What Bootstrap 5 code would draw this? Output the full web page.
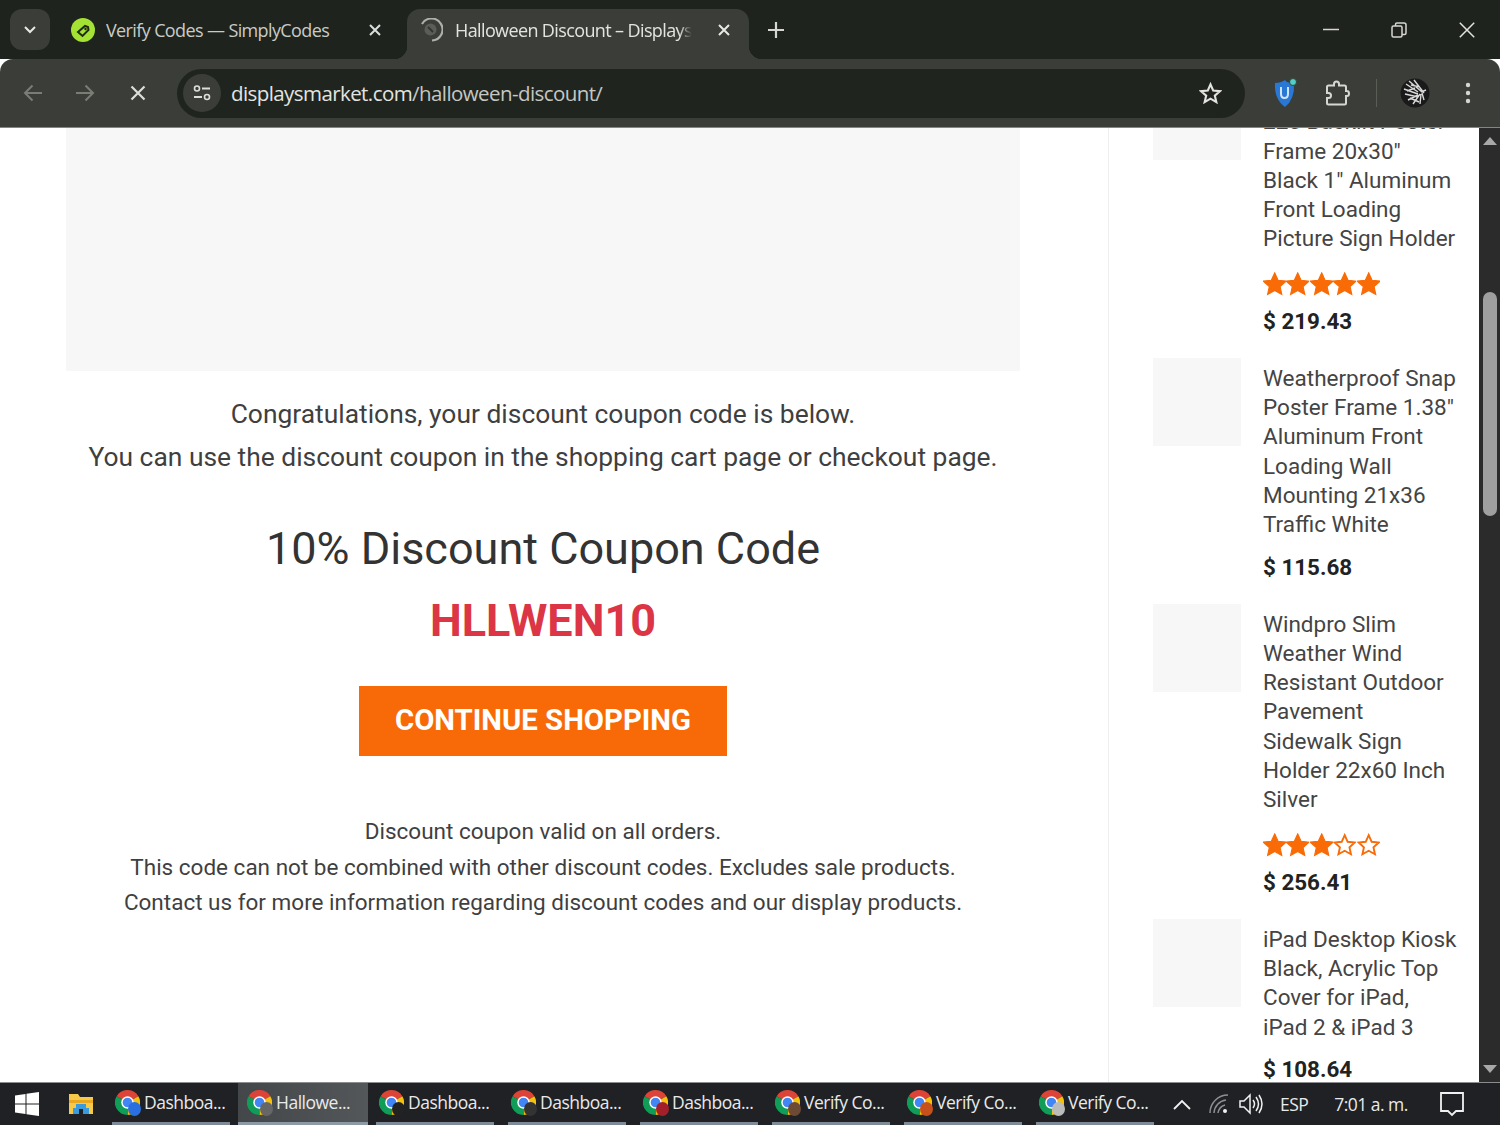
<!DOCTYPE html>
<html lang="es">
<head>
<meta charset="utf-8">
<title>Halloween Discount</title>
<link href="https://cdn.jsdelivr.net/npm/bootstrap@5.3.0/dist/css/bootstrap.min.css" rel="stylesheet">
<style>
html,body{height:1125px;overflow:hidden;background:#fff}
body{width:1500px;font-family:Roboto,sans-serif}
.tabstrip{height:59px;background:#1f231e;color:#c9cbc6;font-family:"Open Sans",sans-serif}
.tab-switch{width:40px;height:41px;margin:9px 0 0 10px;background:#3b3e38;border-radius:12px}
.tab-idle{width:347px;padding:0 15px 0 21px;height:42px;margin-top:9px}
.tab-name{font-size:18px;letter-spacing:-.62px;white-space:nowrap;overflow:hidden}
.tab-name-1{width:235px;margin-left:11px}
.tab-live{width:342px;height:50px;margin:9px 0 0 10px;padding:0 18px 8px 12px;background:#3b3e38;border-radius:13px 13px 0 0;color:#e3e4e1;position:relative}
.tab-live::before,.tab-live::after{content:"";position:absolute;bottom:0;width:13px;height:13px}
.tab-live::before{left:-13px;background:radial-gradient(circle at 0 0,transparent 13px,#3b3e38 13.5px)}
.tab-live::after{right:-13px;background:radial-gradient(circle at 100% 0,transparent 13px,#3b3e38 13.5px)}
.tab-name-2{width:244px;margin-left:12px;-webkit-mask-image:linear-gradient(90deg,#000 92%,transparent 97%);mask-image:linear-gradient(90deg,#000 92%,transparent 97%)}
.new-tab{margin:9px 0 0 19px;height:42px}
.win-controls{margin-left:auto;height:59px;padding:0 25px 0 0;gap:52px}
.toolbar{height:69px;background:#3b3e38;border-bottom:1px solid #85877f;border-radius:13px 13px 0 0;padding:0 23px 0 23px}
.nav-gap-a{margin-left:32px}.nav-gap-b{margin-left:35px}
.omni{margin-left:31px;width:1068px;height:49px;background:#20241f;border-radius:25px;padding:0 23px 0 6px;color:#e3e4e1}
.site-chip{width:38px;height:38px;background:#3b3e38;border-radius:50%}
.url{margin-left:10px;font-family:"Open Sans",sans-serif;font-size:20.5px;letter-spacing:-.58px;white-space:nowrap}
.url-rest{color:#c5c7c2}
.ext-shield{margin-left:28px}.ext-puzzle{margin-left:28px}
.tool-sep{width:1px;height:28px;background:#5a5d56;margin:0 23px 0 26px}
.menu-dots{margin-left:35px}
.page-view{height:954px;min-height:0;overflow:hidden}
.content-main{width:1109px;flex:none;padding-left:66px;padding-right:88px;border-right:1px solid #eee;color:#3f3f3f}
.placeholder-box{height:243px;background:#f7f7f7}
.lead-copy{margin:22px 0 0;font-size:26.4px;line-height:42.5px}
.offer-title{margin:44px 0 0;font-size:45px;line-height:54px;font-weight:400;color:#333}
.offer-code{margin:18px 0 0;font-size:45px;line-height:54px;font-weight:700;color:#dc3545}
.shop-btn{margin-top:38px;width:368px;height:70px;background:#f86a07;border:0;color:#fff;font-size:29.3px;font-weight:700;line-height:68px;padding:0}
.shop-btn:hover{background:#f86a07;color:#fff}
.fine-print{margin:58px 0 0;font-size:22.5px;line-height:35.5px}
.side-rail{flex:1;padding:0 14px 0 44px;margin-top:-56px;color:#444}
.prod-item{gap:22px;margin-bottom:22px}
.prod-thumb{width:88px;height:88px;flex:none;background:#f7f7f7}
.prod-body{padding-top:6px;width:195px;flex:none}
.prod-name{font-size:22.5px;line-height:29.3px}
.prod-stars{margin-top:18px;height:24px}
.prod-price{font-size:22.4px;line-height:29px;font-weight:700;color:#222;margin-top:13px}
.prod-stars + .prod-price{margin-top:11px}
.scroll-rail{width:21px;flex:none;background:#2b2b2b}
.scroll-thumb{width:14px;height:224px;background:#9f9f9f;border-radius:7px;margin-top:147px}
.scroll-arrow{width:0;height:0;border-left:7px solid transparent;border-right:7px solid transparent}
.arrow-up{border-bottom:8px solid #a8a8a8;margin-top:9px}
.arrow-down{border-top:8px solid #a8a8a8;margin-bottom:9px}
.taskbar{height:43px;background:#1f2124;border-top:1px solid #8b8d90;color:#e9eaeb;font-family:"Open Sans",sans-serif;font-size:17.5px;letter-spacing:-.5px}
.start-slot{width:39px}
.folder-slot{width:73px;padding-left:30px}
.task-list{gap:14px}
.task-item{width:118px;height:42px;padding-left:3px;border-bottom:3px solid #7e8b96;position:relative;white-space:nowrap;gap:4px}
.task-item.is-on{width:130px;margin:0 -6px;padding-left:9px;background:linear-gradient(90deg,#44474a,#54575a);border-bottom-color:#8d99a3}
.task-badge{position:absolute;left:16px;top:19px;width:13px;height:14px;border-radius:50%}
.is-on .task-badge{left:22px}
.tray{margin-left:19px;white-space:nowrap}
.tray-wifi{margin-left:18px}.tray-vol{margin-left:10px}.tray-lang{margin-left:17px}.tray-time{margin-left:26px;letter-spacing:-.55px}.tray-note{margin-left:31px}
</style>
</head>
<body class="d-flex flex-column m-0">
<svg width="0" height="0" class="d-block">
<defs>
<symbol id="chromeLogo" viewBox="0 0 24 24">
<path fill="#db4437" d="M12 12 1.6 6A12 12 0 0 1 22.4 6Z"/>
<path fill="#f4c20d" d="M12 12 22.4 6A12 12 0 0 1 12 24Z"/>
<path fill="#0f9d58" d="M12 12 12 24A12 12 0 0 1 1.6 6Z"/>
<circle cx="12" cy="12" r="6" fill="#fff"/><circle cx="12" cy="12" r="4.6" fill="#4285f4"/>
</symbol>
<symbol id="starFull" viewBox="1 1 22 22"><path fill="#f96b06" stroke="#f96b06" stroke-width="1" d="M12 1.5l3.2 7 7.6.8-5.700 5.100 1.600 7.500L12 18.100 5.300 21.900l1.600-7.500L1.200 9.300l7.600-.8z"/></symbol>
<symbol id="starOpen" viewBox="1 1 22 22"><path fill="#fff" stroke="#f96b06" stroke-width="1.800" d="M12 2.800l2.800 6.200 6.600.7-4.900 4.500 1.400 6.500L12 17.400l-5.900 3.300 1.400-6.500-4.900-4.500 6.600-.7z"/></symbol>
</defs>
</svg>

<header class="tabstrip d-flex align-items-start flex-shrink-0">
  <div class="tab-switch d-flex align-items-center justify-content-center">
    <svg width="14" height="9" viewBox="0 0 14 9"><path d="M2 2l5 5 5-5" fill="none" stroke="#e8e9e6" stroke-width="2"/></svg>
  </div>
  <div class="tab-idle d-flex align-items-center">
    <svg width="24" height="24" viewBox="0 0 24 24" class="flex-shrink-0"><circle cx="12" cy="12" r="12" fill="#a4e234"/><path d="M7 14l7-6 3 1 .5 3-6 6z" fill="none" stroke="#1f2b10" stroke-width="2"/><circle cx="14.500" cy="11" r="1.200" fill="#1f2b10"/></svg>
    <div class="tab-name tab-name-1">Verify Codes — SimplyCodes</div>
    <svg width="14" height="14" viewBox="0 0 14 14" class="ms-auto"><path d="M2 2l10 10M12 2 2 12" stroke="#dcdedb" stroke-width="2"/></svg>
  </div>
  <div class="tab-live d-flex align-items-center">
    <svg width="24" height="24" viewBox="0 0 24 24" class="flex-shrink-0"><path d="M3 6A11 11 0 1 1 13 22.500" fill="none" stroke="#aeb0ac" stroke-width="2.200"/><circle cx="11.500" cy="11.500" r="6" fill="#5a5d58"/><path d="M9 9l5 5" stroke="#33362f" stroke-width="2"/></svg>
    <div class="tab-name tab-name-2">Halloween Discount – Displays Market</div>
    <svg width="14" height="14" viewBox="0 0 14 14" class="ms-auto"><path d="M2 2l10 10M12 2 2 12" stroke="#e8e9e6" stroke-width="2"/></svg>
  </div>
  <div class="new-tab d-flex align-items-center">
    <svg width="16" height="16" viewBox="0 0 16 16"><path d="M8 0v16M0 8h16" stroke="#d5d7d3" stroke-width="2.200"/></svg>
  </div>
  <div class="win-controls d-flex align-items-center">
    <svg width="16" height="16" viewBox="0 0 16 16"><path d="M0 7.500h16" stroke="#d5d7d3" stroke-width="1.500"/></svg>
    <svg width="16" height="16" viewBox="0 0 16 16"><rect x="1" y="4" width="10" height="11" rx="1.500" fill="none" stroke="#d5d7d3" stroke-width="1.500"/><path d="M4.500 4V2.500q0-1.500 1.500-1.500h7q2 0 2 2v8q0 1.500-1.500 1.500H11" fill="none" stroke="#d5d7d3" stroke-width="1.500"/></svg>
    <svg width="16" height="16" viewBox="0 0 16 16"><path d="M.8.800l14.400 14.400M15.200.800.800 15.200" stroke="#e3e4e1" stroke-width="1.500"/></svg>
  </div>
</header>

<nav class="toolbar d-flex align-items-center flex-shrink-0">
  <svg width="20" height="18" viewBox="0 0 20 18"><path d="M19 9H2M9.500 1.500 2 9l7.500 7.500" fill="none" stroke="#7a7d76" stroke-width="2"/></svg>
  <svg width="20" height="18" viewBox="0 0 20 18" class="nav-gap-a"><path d="M1 9h17M10.500 1.500 18 9l-7.500 7.500" fill="none" stroke="#7a7d76" stroke-width="2"/></svg>
  <svg width="16" height="16" viewBox="0 0 16 16" class="nav-gap-b"><path d="M1.500 1.500l13 13M14.500 1.500l-13 13" stroke="#dcdedb" stroke-width="2.200"/></svg>
  <div class="omni d-flex align-items-center">
    <div class="site-chip d-flex align-items-center justify-content-center">
      <svg width="18" height="18" viewBox="0 0 18 18"><circle cx="4" cy="4.500" r="2.500" fill="none" stroke="#dcdedb" stroke-width="1.600"/><path d="M9 4.500h8M1 13h8" stroke="#dcdedb" stroke-width="1.800"/><circle cx="14" cy="13" r="2.500" fill="none" stroke="#dcdedb" stroke-width="1.600"/></svg>
    </div>
    <div class="url">displaysmarket.com<span class="url-rest">/halloween-discount/</span></div>
    <svg width="23" height="22" viewBox="0 0 24 23" class="ms-auto"><path d="M12 2.500l2.800 6.400 7 .7-5.300 4.600 1.600 6.800-6.100-3.600-6.100 3.600 1.600-6.800L2.200 9.600l7-.7z" fill="none" stroke="#e3e4e1" stroke-width="2.200"/></svg>
  </div>
  <svg width="24" height="32" viewBox="0 0 24 32" class="ext-shield"><path d="M2 6q6 0 10-3 1 3 9 3 1 16-9 24Q1 22 2 6z" fill="#2a78d6"/><path d="M8 10v7q0 4 3.500 4T15 17v-7" fill="none" stroke="#cfe3fa" stroke-width="2"/><circle cx="20" cy="5" r="3.500" fill="#4fd1c5" stroke="#3b3e38"/></svg>
  <svg width="25" height="26" viewBox="0 0 25 26" class="ext-puzzle"><path d="M3.500 5.500H9V4q0-2.500 2.500-2.500T14 4v1.500h5.500Q21 5.500 21 7v4h1q2 0 2 2.500T22 16h-1v7q0 1.500-1.500 1.500h-16Q2 24.500 2 23v-5h1.500q2.500 0 2.500-2.500T3.500 13H2V7q0-1.500 1.500-1.500z" fill="none" stroke="#d5d7d3" stroke-width="2"/></svg>
  <div class="tool-sep"></div>
  <svg width="30" height="30" viewBox="0 0 30 30"><defs><clipPath id="avatarClip"><circle cx="15" cy="15" r="14.500"/></clipPath></defs><circle cx="15" cy="15" r="14.500" fill="#1a1a1a"/><g clip-path="url(#avatarClip)" stroke="#d8d8d8" stroke-width="1.400"><path d="M6 6l12 8M9 3l13 11M14 2l10 13M4 11l14 5M5 16l13 3M8 22l10-5M13 26l7-10M20 26l1-10M24 22l-2-7M26 12l-5 2M11 7l9 2M7 13l8-3M10 20l9 4"/></g></svg>
  <svg width="6" height="22" viewBox="0 0 6 22" class="menu-dots"><circle cx="3" cy="3" r="2.200" fill="#d5d7d3"/><circle cx="3" cy="11" r="2.200" fill="#d5d7d3"/><circle cx="3" cy="19" r="2.200" fill="#d5d7d3"/></svg>
</nav>

<div class="page-view d-flex flex-grow-1">
  <main class="content-main text-center">
    <div class="placeholder-box"></div>
    <p class="lead-copy">Congratulations, your discount coupon code is below.<br>You can use the discount coupon in the shopping cart page or checkout page.</p>
    <h2 class="offer-title">10% Discount Coupon Code</h2>
    <div class="offer-code">HLLWEN10</div>
    <a href="#" class="btn rounded-0 shop-btn text-uppercase">Continue Shopping</a>
    <p class="fine-print">Discount coupon valid on all orders.<br>This code can not be combined with other discount codes. Excludes sale products.<br>Contact us for more information regarding discount codes and our display products.</p>
  </main>
  <aside class="side-rail">
    <div class="prod-item d-flex">
      <div class="prod-thumb"></div>
      <div class="prod-body">
        <div class="prod-name">Slim LED<br>225 Backlit Poster<br>Frame 20x30"<br>Black 1" Aluminum<br>Front Loading<br>Picture Sign Holder</div>
        <div class="prod-stars d-flex">
          <svg width="23.400" height="24"><use href="#starFull"/></svg><svg width="23.400" height="24"><use href="#starFull"/></svg><svg width="23.400" height="24"><use href="#starFull"/></svg><svg width="23.400" height="24"><use href="#starFull"/></svg><svg width="23.400" height="24"><use href="#starFull"/></svg>
        </div>
        <div class="prod-price">$ 219.43</div>
      </div>
    </div>
    <div class="prod-item d-flex">
      <div class="prod-thumb"></div>
      <div class="prod-body">
        <div class="prod-name">Weatherproof Snap Poster Frame 1.38" Aluminum Front Loading Wall Mounting 21x36 Traffic White</div>
        <div class="prod-price">$ 115.68</div>
      </div>
    </div>
    <div class="prod-item d-flex">
      <div class="prod-thumb"></div>
      <div class="prod-body">
        <div class="prod-name">Windpro Slim Weather Wind Resistant Outdoor Pavement Sidewalk Sign Holder 22x60 Inch Silver</div>
        <div class="prod-stars d-flex">
          <svg width="23.400" height="24"><use href="#starFull"/></svg><svg width="23.400" height="24"><use href="#starFull"/></svg><svg width="23.400" height="24"><use href="#starFull"/></svg><svg width="23.400" height="24"><use href="#starOpen"/></svg><svg width="23.400" height="24"><use href="#starOpen"/></svg>
        </div>
        <div class="prod-price">$ 256.41</div>
      </div>
    </div>
    <div class="prod-item d-flex">
      <div class="prod-thumb"></div>
      <div class="prod-body">
        <div class="prod-name">iPad Desktop Kiosk Black, Acrylic Top Cover for iPad, iPad 2 &amp; iPad 3</div>
        <div class="prod-price">$ 108.64</div>
      </div>
    </div>
  </aside>
  <div class="scroll-rail d-flex flex-column align-items-center">
    <div class="scroll-arrow arrow-up"></div>
    <div class="scroll-thumb"></div>
    <div class="scroll-arrow arrow-down mt-auto"></div>
  </div>
</div>

<footer class="taskbar d-flex align-items-center flex-shrink-0">
  <div class="start-slot d-flex justify-content-end">
    <svg width="24" height="24" viewBox="0 0 24 24"><path fill="#fff" d="M0 3.500 10.500 2v9.500H0zM11.500 1.800 24 0v11.500H11.500zM0 12.500h10.500V22L0 20.500zM11.500 12.500H24V24l-12.500-1.800z"/></svg>
  </div>
  <div class="folder-slot d-flex">
    <svg width="24" height="22" viewBox="0 0 24 22"><path fill="#f7c948" d="M0 1h9l2 3h13v17H0z"/><path fill="#e9a820" d="M0 7h24v3H0z"/><path fill="#3a9bdc" d="M7 11h10v4h3v6H4v-6h3z"/><path fill="#1f2124" d="M10 16h4v5h-4z"/></svg>
  </div>
  <div class="task-list d-flex ms-0">
    <div class="task-item d-flex align-items-center"><svg width="25" height="25"><use href="#chromeLogo"/></svg><span>Dashboa...</span><i class="task-badge" style="background:#2a6fe0"></i></div>
    <div class="task-item is-on d-flex align-items-center"><svg width="25" height="25"><use href="#chromeLogo"/></svg><span>Hallowe...</span><i class="task-badge" style="background:#666"></i></div>
    <div class="task-item d-flex align-items-center"><svg width="25" height="25"><use href="#chromeLogo"/></svg><span>Dashboa...</span><i class="task-badge" style="background:#222"></i></div>
    <div class="task-item d-flex align-items-center"><svg width="25" height="25"><use href="#chromeLogo"/></svg><span>Dashboa...</span><i class="task-badge" style="background:#333"></i></div>
    <div class="task-item d-flex align-items-center"><svg width="25" height="25"><use href="#chromeLogo"/></svg><span>Dashboa...</span><i class="task-badge" style="background:#a3202a"></i></div>
    <div class="task-item d-flex align-items-center"><svg width="25" height="25"><use href="#chromeLogo"/></svg><span>Verify Co...</span><i class="task-badge" style="background:#6d4a34"></i></div>
    <div class="task-item d-flex align-items-center"><svg width="25" height="25"><use href="#chromeLogo"/></svg><span>Verify Co...</span><i class="task-badge" style="background:#c8501a"></i></div>
    <div class="task-item d-flex align-items-center"><svg width="25" height="25"><use href="#chromeLogo"/></svg><span>Verify Co...</span><i class="task-badge" style="background:#bbb"></i></div>
  </div>
  <div class="tray d-flex align-items-center">
    <svg width="18" height="11" viewBox="0 0 18 11"><path d="M1 10l8-8 8 8" fill="none" stroke="#f1f1f1" stroke-width="1.800"/></svg>
    <svg width="20" height="20" viewBox="0 0 20 20" class="tray-wifi"><path d="M1 19A18 18 0 0 1 19 1M5 19A14 14 0 0 1 17 6M9 19a10 10 0 0 1 7-8" fill="none" stroke="#8d8f91" stroke-width="1.500"/><circle cx="16" cy="17" r="2" fill="#f1f1f1"/></svg>
    <svg width="24" height="22" viewBox="0 0 24 22" class="tray-vol"><path d="M1 8h4l6-6v18l-6-6H1z" fill="none" stroke="#f1f1f1" stroke-width="1.500"/><path d="M14 7q3 4 0 8M17 4q5 7 0 14M20 2q6 9 0 18" fill="none" stroke="#f1f1f1" stroke-width="1.500"/></svg>
    <span class="tray-lang">ESP</span>
    <span class="tray-time">7:01 a. m.</span>
    <svg width="26" height="26" viewBox="0 0 26 26" class="tray-note"><path d="M2 2h22v18h-7l-4 4-4-4H2z" fill="none" stroke="#f1f1f1" stroke-width="1.800"/></svg>
  </div>
</footer>
</body>
</html>
